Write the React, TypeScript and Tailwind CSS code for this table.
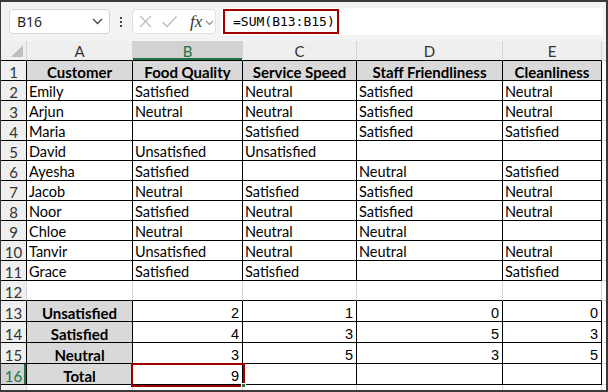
import React from "react";

const W = ["w-[106px]", "w-[110px]", "w-[114px]", "w-[146px]", "w-[99px]"];
const LETTERS = ["A", "B", "C", "D", "E"];

const body: string[][] = [
  ["Emily", "Satisfied", "Neutral", "Satisfied", "Neutral"],
  ["Arjun", "Neutral", "Neutral", "Satisfied", "Neutral"],
  ["Maria", "", "Satisfied", "Satisfied", "Satisfied"],
  ["David", "Unsatisfied", "Unsatisfied", "", ""],
  ["Ayesha", "Satisfied", "", "Neutral", "Satisfied"],
  ["Jacob", "Neutral", "Satisfied", "Satisfied", "Neutral"],
  ["Noor", "Satisfied", "Neutral", "Satisfied", "Neutral"],
  ["Chloe", "Neutral", "Neutral", "Neutral", ""],
  ["Tanvir", "Unsatisfied", "Neutral", "Neutral", "Neutral"],
  ["Grace", "Satisfied", "Satisfied", "", "Satisfied"],
];

const summary: string[][] = [
  ["Unsatisfied", "2", "1", "0", "0"],
  ["Satisfied", "4", "3", "5", "3"],
  ["Neutral", "3", "5", "3", "5"],
  ["Total", "9", "", "", ""],
];

const calibri = "font-['Lato','Carlito',sans-serif]";

function RowHeader({ n, rb, bb, sel }: { n: string; rb: boolean; bb: boolean; sel?: boolean }) {
  return (
    <div
      className={`w-[26px] shrink-0 border-r border-b flex items-end justify-center text-[15px] leading-[16px] ${calibri} ${
        rb ? "border-r-black" : "border-r-[#d4d4d4]"
      } ${bb ? "border-b-black" : "border-b-[#d4d4d4]"} ${
        sel ? "bg-[#d2d2d2] text-[#217346] shadow-[inset_-2px_0_0_#217346]" : "bg-[#efefef] text-[#333]"
      }`}
    >
      {n}
    </div>
  );
}

function Filler() {
  return <div className="flex-1 border-b border-b-[#d4d4d4]" />;
}

export default function App() {
  return (
    <div className="w-[608px] h-[392px] bg-white border border-[#3a3a3a] border-t-2 border-r-2 border-b-2 flex flex-col overflow-hidden box-border">
      {/* Toolbar */}
      <div className="h-[39px] shrink-0 bg-[#f3f3f3] flex items-center relative">
        <div className="ml-[8px] w-[101px] h-[25px] bg-white border border-[#d6d6d6] rounded-[4px] flex items-center justify-between pl-[7px] pr-[6px] font-['Noto_Sans',sans-serif] text-[14px] text-[#1f1f1f]">
          <span>B16</span>
          <svg width="11" height="7" viewBox="0 0 11 7">
            <path d="M1 1 L5.5 5.5 L10 1" fill="none" stroke="#444" strokeWidth="1.3" />
          </svg>
        </div>
        <div className="w-[22px] flex flex-col items-center gap-[2px]">
          <span className="w-[2px] h-[2px] bg-[#444]" />
          <span className="w-[2px] h-[2px] bg-[#444]" />
          <span className="w-[2px] h-[2px] bg-[#444]" />
        </div>
        <div className="w-[84px] h-[25px] bg-white border border-[#e0e0e0] rounded-[4px] flex items-center pl-[5px]">
          <svg width="15" height="15" viewBox="0 0 15 15">
            <path d="M2 2 L13 13 M13 2 L2 13" stroke="#bdbdbd" strokeWidth="1.3" fill="none" />
          </svg>
          <svg width="17" height="15" viewBox="0 0 17 15" className="ml-[8px]">
            <path d="M1.5 8 L6 12.5 L15.5 2.5" stroke="#bdbdbd" strokeWidth="1.3" fill="none" />
          </svg>
          <span className="ml-[12px] font-['Liberation_Serif',serif] italic text-[17px] text-[#333] leading-none">
            fx
          </span>
          <svg width="9" height="6" viewBox="0 0 9 6" className="ml-[3px] mt-[2px]">
            <path d="M0.8 0.8 L4.5 4.5 L8.2 0.8" fill="none" stroke="#888" strokeWidth="1.1" />
          </svg>
        </div>
        <div className="ml-[5px] w-[382px] h-[27px] bg-white flex items-center pl-[2px]">
          <div className="h-[25px] w-[116px] border-2 border-[#a00000] flex items-center pl-[8px] font-['DejaVu_Sans_Mono',monospace] text-[13px] text-black">
            =SUM(B13:B15)
          </div>
        </div>
      </div>

      {/* Grid */}
      <div className="flex-1 flex flex-col relative">
        {/* Column headers */}
        <div className="flex h-[20px] shrink-0 bg-[#efefef]">
          <div className="w-[26px] shrink-0 border-r border-b border-r-[#d4d4d4] border-b-black relative">
            <svg width="12" height="12" viewBox="0 0 12 12" className="absolute right-[3px] bottom-[3px]">
              <path d="M12 0 L12 12 L0 12 Z" fill="#bfbfbf" />
            </svg>
          </div>
          {LETTERS.map((l, i) => (
            <div
              key={l}
              className={`${W[i]} shrink-0 border-r border-b border-r-[#d4d4d4] border-b-black flex items-end justify-center pb-[1px] text-[15px] leading-[16px] ${calibri} ${
                i === 1 ? "bg-[#d2d2d2] text-[#217346] shadow-[inset_0_-2px_0_#217346]" : "text-[#333]"
              }`}
            >
              {l}
            </div>
          ))}
          <div className="flex-1 border-b border-b-[#d4d4d4]" />
        </div>

        {/* Row 1 header */}
        <div className="flex h-[20px] shrink-0">
          <RowHeader n="1" rb bb />
          {["Customer", "Food Quality", "Service Speed", "Staff Friendliness", "Cleanliness"].map((t, i) => (
            <div
              key={t}
              className={`${W[i]} shrink-0 border-r border-b border-black bg-[#d9d9d9] flex items-end justify-center font-bold text-[15px] leading-[16px] text-black whitespace-nowrap ${calibri}`}
            >
              {t}
            </div>
          ))}
          <Filler />
        </div>

        {/* Body rows */}
        {body.map((r, ri) => (
          <div key={ri} className="flex h-[20px] shrink-0">
            <RowHeader n={String(ri + 2)} rb bb />
            {r.map((t, i) => (
              <div
                key={i}
                className={`${W[i]} shrink-0 border-r border-b border-black flex items-end pl-[2px] text-[14.5px] leading-[16px] text-black whitespace-nowrap ${calibri}`}
              >
                {t}
              </div>
            ))}
            <Filler />
          </div>
        ))}

        {/* Row 12 */}
        <div className="flex h-[20px] shrink-0">
          <RowHeader n="12" rb={false} bb />
          {W.map((w, i) => (
            <div key={i} className={`${w} shrink-0 border-r border-b border-r-[#d4d4d4] border-b-black`} />
          ))}
          <Filler />
        </div>

        {/* Summary rows */}
        {summary.map((r, ri) => (
          <div key={ri} className="flex h-[21px] shrink-0">
            <RowHeader n={String(ri + 13)} rb bb sel={ri === 3} />
            {r.map((t, i) =>
              i === 0 ? (
                <div
                  key={i}
                  className={`${W[i]} shrink-0 border-r border-b border-black bg-[#d9d9d9] flex items-end justify-center font-bold text-[15px] leading-[16px] text-black ${calibri}`}
                >
                  {t}
                </div>
              ) : (
                <div
                  key={i}
                  className={`${W[i]} shrink-0 border-r border-b border-black flex items-end justify-end pr-[3px] text-[14.5px] leading-[16px] text-black font-['Liberation_Sans',sans-serif]`}
                >
                  {t}
                </div>
              )
            )}
            <Filler />
          </div>
        ))}

        {/* Row 17 partial */}
        <div className="flex flex-1">
          <div className="w-[26px] shrink-0 bg-[#efefef] border-r border-r-[#d4d4d4]" />
          {W.map((w, i) => (
            <div key={i} className={`${w} shrink-0 border-r border-r-[#d4d4d4]`} />
          ))}
          <div className="flex-1" />
        </div>

        {/* Selected cell highlight B16 */}
        <div className="absolute left-[130px] top-[322px] w-[114px] h-[24px] border-2 border-[#a00000] pointer-events-none" />
        <div className="absolute left-[240px] top-[342px] w-[5px] h-[5px] bg-[#217346] border border-white" />
      </div>
    </div>
  );
}
